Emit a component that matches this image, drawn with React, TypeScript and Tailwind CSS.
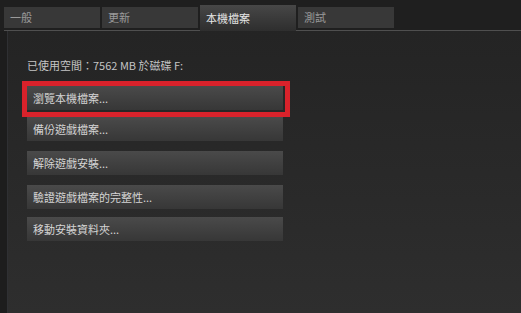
import React from 'react'

const tabs = [
  { label: '一般', active: false },
  { label: '更新', active: false },
  { label: '本機檔案', active: true },
  { label: '測試', active: false },
]

const actions = [
  { label: '瀏覽本機檔案...', mt: 'mt-[13px]', marked: true },
  { label: '備份遊戲檔案...', mt: 'mt-[7px]' },
  { label: '解除遊戲安裝...', mt: 'mt-[10px]' },
  { label: '驗證遊戲檔案的完整性...', mt: 'mt-[10px]' },
  { label: '移動安裝資料夾...', mt: 'mt-[8px]' },
]

const font = { fontFamily: '"Noto Sans CJK TC", "Noto Sans", sans-serif' }

export default function App() {
  return (
    <div className="w-[521px] h-[313px] overflow-hidden bg-[#1f1f1f] flex flex-col" style={font}>
      {/* tab strip */}
      <div className="h-[31px] shrink-0 flex items-end pl-[4px] bg-[#1f1f1f]">
        <div className="flex-1 flex items-end border-b border-[#4f4f4f]">
          {tabs.map((t) => (
            <div
              key={t.label}
              className={
                t.active
                  ? 'w-[96px] h-[26px] mr-[2px] -mb-px flex items-center pl-[6px] text-[11px] text-[#e6e6e6] bg-gradient-to-b from-[#474747] to-[#2e2e2e]'
                  : 'w-[96px] h-[21px] mr-[2px] mb-[2px] flex items-center pl-[6px] text-[11px] text-[#9a9a9a] bg-[#383838]'
              }
            >
              {t.label}
            </div>
          ))}
        </div>
      </div>

      <div className="flex-1 flex">
        <div className="w-[8px] shrink-0 bg-[#1d1d1d] border-r border-[#2f3033]" />
        {/* content */}
        <div className="flex-1 bg-gradient-to-b from-[#242424] to-[#2e2e2e] pl-[19px] pt-[26px]">
          <p className="text-[11px] leading-[16px] text-[#c4c4c4]">已使用空間：7562 MB 於磁碟 F:</p>
          {actions.map((a) => (
            <div key={a.label} className={`relative w-[256px] ${a.mt}`}>
              <div className="h-[24px] flex items-center pl-[6px] text-[11px] text-[#d4d4d4] bg-gradient-to-b from-[#4a4a4a] to-[#373737]">
                {a.label}
              </div>
              {a.marked && (
                <div className="absolute -left-[5px] -top-[5px] w-[268px] h-[36px] border-[5px] border-[#d9222b]" />
              )}
            </div>
          ))}
        </div>
      </div>
    </div>
  )
}
